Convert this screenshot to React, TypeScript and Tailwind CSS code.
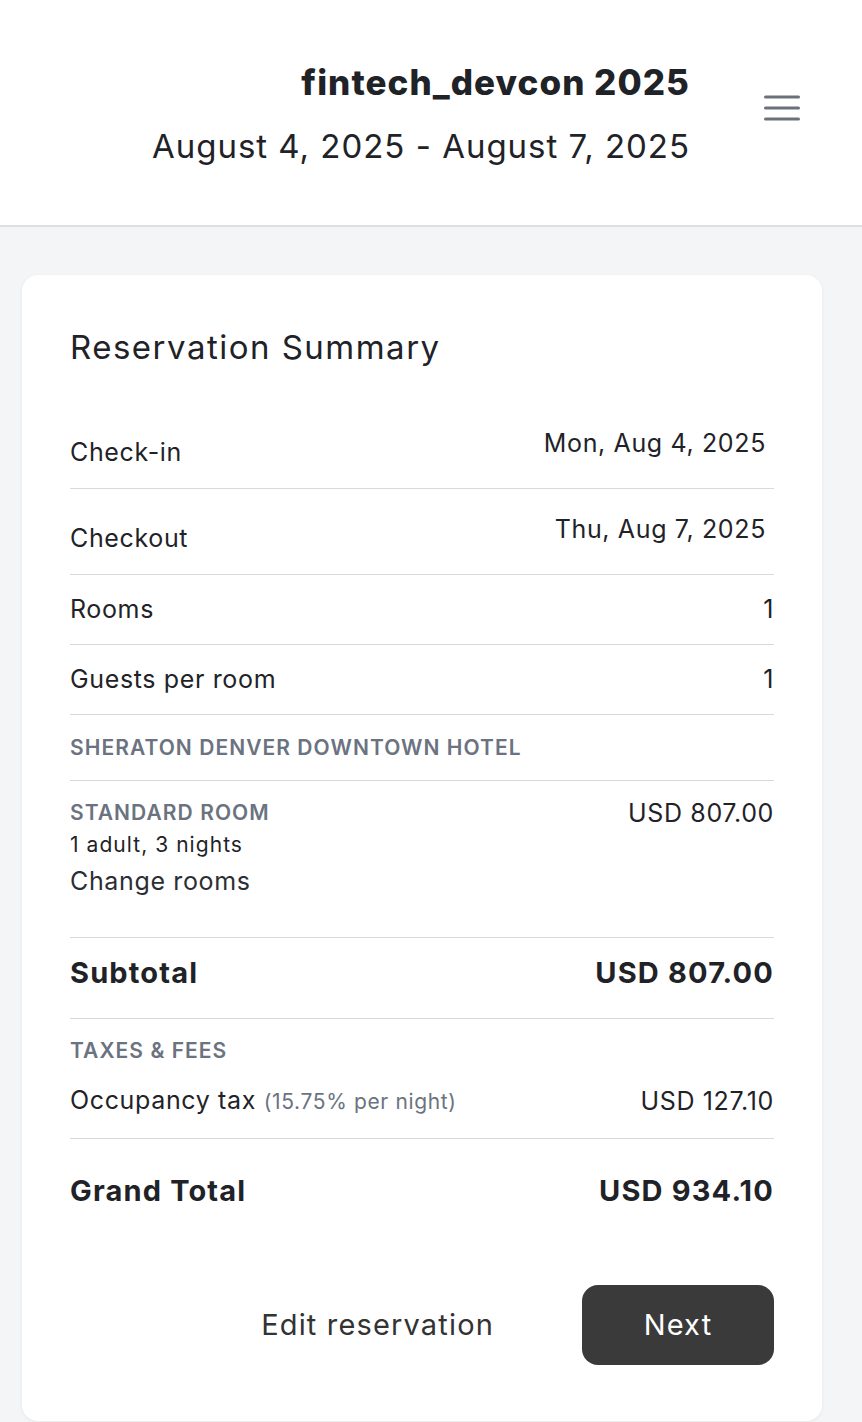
import React from 'react';

const Row: React.FC<{ label: string; value: string; top?: boolean }> = ({ label, value, top }) => (
  <div className={`flex justify-between border-b border-[#d9d9d9] ${top ? 'items-start pt-[21px] pb-[17px]' : 'items-center py-[16px]'}`}>
    <span className={top ? 'pt-[9px]' : ''}>{label}</span>
    <span className={top ? 'pr-2' : ''}>{value}</span>
  </div>
);

export default function App() {
  return (
    <div className="min-h-[1422px] bg-[#f4f5f7] tracking-[0.04em] text-[#1f2328]" style={{ fontFamily: 'Inter, Roboto, sans-serif' }}>
      {/* Header */}
      <header className="flex h-[227px] items-start justify-end gap-[74px] border-b-2 border-[#dedfe2] bg-white pr-[62px] pt-[60px]">
        <div className="flex flex-col items-end">
          <h1 className="text-[35px] font-extrabold leading-[44px] tracking-[0.03em]">fintech_devcon 2025</h1>
          <div className="mt-[20px] text-[33px] leading-[44px] tracking-[0.03em]">August 4, 2025 - August 7, 2025</div>
        </div>
        <button className="mt-[35px] flex h-[26px] w-[36px] items-center justify-center" aria-label="Menu">
          <svg width="36" height="26" viewBox="0 0 36 26" fill="none">
            <path d="M1.5 2h33M1.5 13h33M1.5 24h33" stroke="#6b7079" strokeWidth="3" strokeLinecap="round" />
          </svg>
        </button>
      </header>

      {/* Card */}
      <div className="pl-[22px] pr-[40px] pt-[48px]">
        <div className="rounded-[16px] bg-white px-[48px] pb-[56px] pt-[52px] shadow-[0_1px_4px_rgba(0,0,0,0.06)]">
          <h2 className="text-[33px] leading-[40px] tracking-[0.045em]">Reservation Summary</h2>

          <div className="mt-[36px] text-[25px] leading-[38px]">
            <Row label="Check-in" value="Mon, Aug 4, 2025" top />
            <Row label="Checkout" value="Thu, Aug 7, 2025" top />
            <div className="flex items-center justify-between border-b border-[#d9d9d9] py-[16px] leading-[37px]">
              <span>Rooms</span>
              <span>1</span>
            </div>
            <div className="flex items-center justify-between border-b border-[#d9d9d9] py-[16px] leading-[37px]">
              <span>Guests per room</span>
              <span>1</span>
            </div>
            <div className="border-b border-[#d9d9d9] py-[16px] text-[21px] font-semibold uppercase leading-[33px] tracking-[0.05em] text-[#6b7380]">
              Sheraton Denver Downtown Hotel
            </div>
            <div className="flex items-start justify-between border-b border-[#d9d9d9] pb-[36px] pt-[16px]">
              <div className="flex flex-col">
                <span className="text-[21px] font-semibold uppercase leading-[32px] tracking-[0.05em] text-[#6b7380]">Standard Room</span>
                <span className="text-[21px] leading-[32px] tracking-[0.05em]">1 adult, 3 nights</span>
                <span className="leading-[40px] text-[#2b2f33]">Change rooms</span>
              </div>
              <span className="leading-[32px]">USD 807.00</span>
            </div>
            <div className="flex items-center justify-between border-b border-[#d9d9d9] pb-[25px] pt-[15px] text-[29px] font-bold leading-[40px] tracking-[0.04em]">
              <span>Subtotal</span>
              <span>USD 807.00</span>
            </div>
            <div className="border-b border-[#d9d9d9] pb-[12px] pt-[16px]">
              <div className="text-[21px] font-semibold uppercase leading-[32px] tracking-[0.05em] text-[#6b7380]">Taxes &amp; Fees</div>
              <div className="mt-[9px] flex items-center justify-between leading-[48px]">
                <span>
                  Occupancy tax <span className="text-[21px] text-[#6b7380]">(15.75% per night)</span>
                </span>
                <span>USD 127.10</span>
              </div>
            </div>
            <div className="flex items-center justify-between py-[32px] text-[29px] font-bold leading-[40px] tracking-[0.04em]">
              <span>Grand Total</span>
              <span>USD 934.10</span>
            </div>
          </div>

          <div className="mt-[42px] flex items-center justify-end gap-[88px]">
            <button className="text-[29px] tracking-[0.04em] text-[#333]">Edit reservation</button>
            <button className="h-[80px] w-[192px] rounded-[16px] bg-[#3a3a3a] text-[29px] tracking-[0.04em] text-white">Next</button>
          </div>
        </div>
      </div>
    </div>
  );
}
